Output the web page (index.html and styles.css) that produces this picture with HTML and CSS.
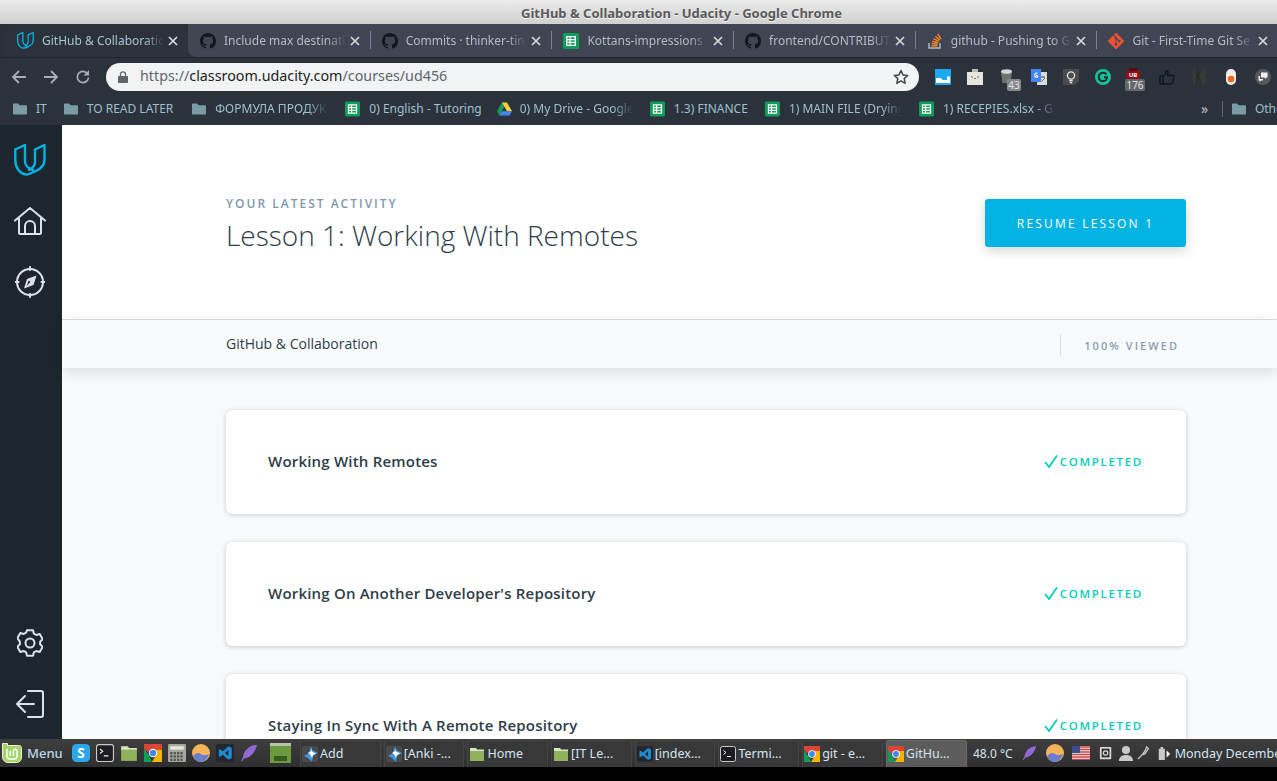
FILE: index.html
```html
<!DOCTYPE html>
<html lang="en">
<head>
<meta charset="utf-8">
<title>GitHub &amp; Collaboration - Udacity</title>
<link rel="stylesheet" href="styles.css">
</head>
<body>
<svg class="defs" width="0" height="0" aria-hidden="true">
  <symbol id="gh" viewBox="0 0 16 16"><path fill="#14161a" d="M8 0C3.58 0 0 3.58 0 8c0 3.54 2.29 6.53 5.47 7.59.4.07.55-.17.55-.38 0-.19-.01-.82-.01-1.49-2.01.37-2.53-.49-2.69-.94-.09-.23-.48-.94-.82-1.13-.28-.15-.68-.52-.01-.53.63-.01 1.08.58 1.23.82.72 1.21 1.87.87 2.33.66.07-.52.28-.87.51-1.07-1.78-.2-3.64-.89-3.64-3.95 0-.87.31-1.59.82-2.15-.08-.2-.36-1.02.08-2.12 0 0 .67-.21 2.2.82.64-.18 1.32-.27 2-.27.68 0 1.36.09 2 .27 1.53-1.04 2.2-.82 2.2-.82.44 1.1.16 1.92.08 2.12.51.56.82 1.27.82 2.15 0 3.07-1.87 3.75-3.65 3.95.29.25.54.73.54 1.48 0 1.07-.01 1.93-.01 2.2 0 .21.15.46.55.38A8.013 8.013 0 0016 8c0-4.42-3.58-8-8-8z"/></symbol>
  <symbol id="sheet" viewBox="0 0 16 16"><rect width="16" height="16" rx="1.5" fill="#0f9d58"/><path fill="none" stroke="#fff" stroke-width="1.3" d="M3.700 3.700h8.600v8.600H3.700zM3.700 6.600h8.600M3.700 9.400h8.600M7 3.700v8.600"/></symbol>
  <symbol id="udacity" viewBox="0 0 32 32"><path fill="none" stroke="currentColor" stroke-width="2.400" stroke-linejoin="round" stroke-linecap="round" d="M1.300 5.500L11 1v16c0 4 3 7.500 8 9M1.300 5.500V16c0 8 4.700 14 10.700 14.500 2 0 6-1.500 10-3.500 5-2.500 8.500-6 8.500-11V1L21 5.500V18c0 3-2 6-6 8"/></symbol>
  <symbol id="close" viewBox="0 0 10 10"><path fill="none" stroke="currentColor" stroke-width="1.700" d="M1 1l8 8M9 1l-8 8"/></symbol>
  <symbol id="folder" viewBox="0 0 14 14"><path fill="#7b9ca5" d="M0 2.500C0 2 .4 1.500 1 1.500h4l1.500 1.800H13c.6 0 1 .4 1 1v7.200c0 .6-.4 1-1 1H1c-.6 0-1-.4-1-1z"/></symbol>
  <symbol id="chrome" viewBox="0 0 16 16"><path fill="#db4437" d="M0 0h16v5H8L3 7 0 4z"/><path fill="#0f9d58" d="M0 4l5 7 2 5H0z"/><path fill="#f4b400" d="M8 5h8v11H7l3-5z"/><circle cx="8" cy="8" r="3.800" fill="#fff"/><circle cx="8" cy="8" r="2.900" fill="#4285f4"/></symbol>
  <symbol id="tfolder" viewBox="0 0 16 16"><path fill="#d8e4c8" d="M1 2h6l1 1.500h7V6H1z"/><path fill="#8fb35c" d="M1 5h14v10H1z"/></symbol>
  <symbol id="tterm" viewBox="0 0 16 16"><rect x=".5" y=".5" width="15" height="15" rx="2" fill="#1c1c22" stroke="#c9c9c9"/><path fill="none" stroke="#eee" stroke-width="1" d="M3.500 4.500l2.500 2-2.500 2M7 10.500h4"/></symbol>
  <symbol id="tanki" viewBox="0 0 16 16"><rect width="16" height="16" rx="2" fill="#4a4a4a"/><path fill="#3f97e6" d="M9 0l1 4 6 3-5 3-1 6-4-4-4-2 5-3z"/><path fill="#fff" d="M9 2l1 3.500 4 2-3 1.500-1 3-2-4-2-1 3-2z"/></symbol>
  <symbol id="tcode" viewBox="0 0 16 16"><rect width="16" height="16" rx="2" fill="#23272c"/><path fill="#1f8ad2" d="M11 2l3 1.500v9L11 14 6 9.500 3.500 11.300 2.500 10.800V5.200l1-.5L6 6.500zM11 5.300L8 8l3 2.700z"/></symbol>
  <symbol id="tglobe" viewBox="0 0 18 18"><circle cx="9" cy="9" r="9" fill="#f6b55a"/><path fill="#6b7fd0" d="M1 12c3-3 5-4 8-2s5 1 8 0c-1 4-4 8-8 8s-7-3-8-6z"/></symbol>
  <symbol id="tfeather" viewBox="0 0 18 18"><path fill="#9468d2" d="M17 1C10 1 4 6 3 13l-2 4 1 .5 2-3c6 0 11-6 13-13.500z"/></symbol>
  <symbol id="tskype" viewBox="0 0 16 16"><rect width="16" height="16" rx="4" fill="#29a8e8"/><text x="8" y="12.500" class="skype-s">S</text></symbol>
</svg>

<div class="screen">
  <header class="titlebar">GitHub &amp; Collaboration - Udacity - Google Chrome</header>

  <nav class="tabstrip">
    <div class="tab tab-active">
      <svg class="tab-ico udacity-c"><use href="#udacity"/></svg>
      <span class="tab-title">GitHub &amp; Collaboratio</span>
      <svg class="tab-x"><use href="#close"/></svg>
    </div>
    <div class="tab tab-first">
      <svg class="tab-ico"><use href="#gh"/></svg>
      <span class="tab-title">Include max destinati</span>
      <svg class="tab-x"><use href="#close"/></svg>
    </div>
    <div class="tab">
      <svg class="tab-ico"><use href="#gh"/></svg>
      <span class="tab-title">Commits · thinker-tin</span>
      <svg class="tab-x"><use href="#close"/></svg>
    </div>
    <div class="tab">
      <svg class="tab-ico"><use href="#sheet"/></svg>
      <span class="tab-title">Kottans-impressions</span>
      <svg class="tab-x"><use href="#close"/></svg>
    </div>
    <div class="tab">
      <svg class="tab-ico"><use href="#gh"/></svg>
      <span class="tab-title">frontend/CONTRIBUT</span>
      <svg class="tab-x"><use href="#close"/></svg>
    </div>
    <div class="tab">
      <svg class="tab-ico" viewBox="0 0 16 16"><path fill="none" stroke="#bcbbbb" stroke-width="1.400" d="M2 10v5h11v-5"/><path fill="none" stroke="#f48024" stroke-width="1.500" d="M4.500 12.800h6M4.700 10.600l5.900.6M5.300 8.200l5.700 1.500M6.500 5.700l5.200 2.700M8.400 3.300l4.400 3.800M10.800 1l3.200 4.800"/></svg>
      <span class="tab-title">github - Pushing to Gi</span>
      <svg class="tab-x"><use href="#close"/></svg>
    </div>
    <div class="tab">
      <svg class="tab-ico" viewBox="0 0 16 16"><path fill="#f05033" d="M15.700 7.300L8.700.3a1 1 0 00-1.400 0L5.800 1.800l1.800 1.800a1.200 1.200 0 011.500 1.500l1.800 1.800a1.200 1.200 0 11-.7.700L8.500 6v4.400a1.200 1.200 0 11-1-.1V5.900a1.200 1.200 0 01-.6-1.600L5.100 2.500.3 7.300a1 1 0 000 1.400l7 7a1 1 0 001.400 0l7-7a1 1 0 000-1.400z"/></svg>
      <span class="tab-title">Git - First-Time Git Se</span>
      <svg class="tab-x"><use href="#close"/></svg>
    </div>
  </nav>

  <div class="toolbar">
    <svg class="nav-ico" viewBox="0 0 16 16"><path fill="none" stroke="#a9aeb5" stroke-width="1.800" d="M15 8H2M8 2L2 8l6 6"/></svg>
    <svg class="nav-ico" viewBox="0 0 16 16"><path fill="none" stroke="#a9aeb5" stroke-width="1.800" d="M1 8h13M8 2l6 6-6 6"/></svg>
    <svg class="nav-ico" viewBox="0 0 16 16"><path fill="none" stroke="#a9aeb5" stroke-width="1.700" d="M13.500 8.500A5.600 5.600 0 118 2.400c1.800 0 3.300.8 4.500 2.300"/><path fill="#a9aeb5" d="M14 1v5.500H8.500z"/></svg>
    <div class="omnibox">
      <svg class="lock" viewBox="0 0 10 12"><path fill="#5f6368" d="M1 5h8c.5 0 1 .4 1 1v5c0 .6-.5 1-1 1H1c-.5 0-1-.4-1-1V6c0-.6.5-1 1-1z"/><path fill="none" stroke="#5f6368" stroke-width="1.300" d="M2.500 5.500V3.300a2.500 2.500 0 015 0v2.200"/></svg>
      <span class="url"><span class="url-dim">https://</span>classroom.udacity.com<span class="url-dim">/courses/ud456</span></span>
      <svg class="star" viewBox="0 0 16 16"><path fill="none" stroke="#44474c" stroke-width="1.500" stroke-linejoin="round" d="M8 1.500l2 4.400 4.700.5-3.500 3.200 1 4.700L8 11.900l-4.200 2.400 1-4.700L1.300 6.400 6 5.900z"/></svg>
    </div>
    <div class="extensions">
      <span class="ext"><svg viewBox="0 0 16 16" class="ext-ico"><rect width="16" height="16" fill="#1ea7f2"/><path fill="#fff" d="M1 9h5l1.500 2H12V7.500h3V14H1z"/></svg></span>
      <span class="ext"><svg viewBox="0 0 16 16" class="ext-ico"><path fill="#e6e4de" d="M0 3h16v13H0z"/><path fill="#bdbab2" d="M5 0h6v3H5z"/><path fill="none" stroke="#777" d="M4 7.500l2 1M12 7.500l-2 1M7 9.500h2"/></svg></span>
      <span class="ext"><svg viewBox="0 0 16 16" class="ext-ico"><path fill="#6f7273" d="M2 3h11l-1.500 11h-8z"/><ellipse cx="7.500" cy="2.500" rx="5.500" ry="2.300" fill="#d5d6d6"/></svg><b class="badge badge-small">43</b></span>
      <span class="ext"><svg viewBox="0 0 16 16" class="ext-ico"><path fill="#d8dadd" d="M7 3h9v13H6z"/><path fill="#4285f4" d="M0 0h10v13H0z"/><path fill="none" stroke="#fff" stroke-width="1.200" d="M6.500 4.500a2 2 0 100 3.500V6.500H5"/><path fill="none" stroke="#666" d="M10 8h4M12 7v2M10.500 12.500L14 9"/></svg></span>
      <span class="ext"><svg viewBox="0 0 16 16" class="ext-ico"><path fill="#4a4b4c" d="M0 0h16v12l-4 4H0z"/><circle cx="8" cy="6.500" r="3.600" fill="none" stroke="#e2e2e2" stroke-width="1.300"/><path stroke="#e2e2e2" stroke-width="1.400" d="M6.300 11.500h3.400M6.800 13.500h2.400"/></svg></span>
      <span class="ext"><svg viewBox="0 0 16 16" class="ext-ico"><circle cx="8" cy="8" r="8" fill="#15c39a"/><path fill="none" stroke="#1a2b2a" stroke-width="2" d="M11.500 5.500A4.300 4.300 0 108 12.300a4 4 0 004-4H9"/></svg></span>
      <span class="ext"><svg viewBox="0 0 16 16" class="ext-ico ext-ub"><path fill="#8b0f16" d="M1 3h14v9H1z"/><path fill="#5c0a0f" d="M4 0h8v3H4z"/><text x="8" y="9" class="ext-text">UB</text></svg><b class="badge">176</b></span>
      <span class="ext"><svg viewBox="0 0 16 16" class="ext-ico"><path fill="none" stroke="#101317" stroke-width="1.300" d="M1 7h3v8H1zM4 7.500l3-3V1.500c1.500-.5 2.500 1 2 3L8.500 6.500H14c1 0 1.500 1 1 2l-1.500 5.500c-.2.700-.7 1-1.500 1H4"/></svg></span>
      <span class="ext"><svg viewBox="0 0 16 16" class="ext-ico"><rect x="1.500" width="13" height="15" fill="#36393a"/><path fill="none" stroke="#27292a" stroke-width="1.400" d="M6 0v15M9 0v4l-2.500 3.500L9 11v4"/></svg></span>
      <span class="ext"><svg viewBox="0 0 16 16" class="ext-ico"><rect x="3" width="10" height="16" rx="5" fill="#f3eeea"/><circle cx="8" cy="10" r="3.300" fill="#f26522"/></svg></span>
      <span class="ext"><svg viewBox="0 0 16 16" class="ext-ico"><circle cx="8" cy="8" r="8" fill="#55585b"/><path fill="#f0f0f0" d="M6 3.500h6.500v5H11v1.500L9.500 8.500H6z"/><path fill="#f0f0f0" d="M3.500 7H5v3h3v1.500H6L4.500 13v-1.500h-1z"/></svg></span>
    </div>
  </div>

  <div class="bookmarks">
    <span class="bm"><svg class="bm-folder"><use href="#folder"/></svg><span>IT</span></span>
    <span class="bm bm-later"><svg class="bm-folder"><use href="#folder"/></svg><span>TO READ LATER</span></span>
    <span class="bm"><svg class="bm-folder"><use href="#folder"/></svg><span class="bm-cut">ФОРМУЛА ПРОДУК</span></span>
    <span class="bm bm-english"><svg class="bm-sheet"><use href="#sheet"/></svg><span>0) English - Tutoring</span></span>
    <span class="bm bm-drive"><svg class="bm-sheet" viewBox="0 0 16 16"><path fill="#0f9d58" d="M5.300 1L0 10.300 2.600 15l5.300-9.300z"/><path fill="#ffcd40" d="M5.300 1h5.300L16 10.300h-5.300z"/><path fill="#4285f4" d="M2.600 15l2.700-4.700H16L13.300 15z"/></svg><span class="bm-cut">0) My Drive - Google</span></span>
    <span class="bm"><svg class="bm-sheet"><use href="#sheet"/></svg><span>1.3) FINANCE</span></span>
    <span class="bm"><svg class="bm-sheet"><use href="#sheet"/></svg><span class="bm-cut">1) MAIN FILE (Drying</span></span>
    <span class="bm"><svg class="bm-sheet"><use href="#sheet"/></svg><span class="bm-cut">1) RECEPIES.xlsx - G</span></span>
    <span class="bm-more">»</span>
    <span class="bm-sep"></span>
    <span class="bm bm-other"><svg class="bm-folder"><use href="#folder"/></svg><span>Other bookmarks</span></span>
  </div>

  <div class="app">
    <aside class="sidebar">
      <svg class="side-logo"><use href="#udacity"/></svg>
      <svg class="side-home" viewBox="0 0 32 28"><path fill="none" stroke="#dbe2e8" stroke-width="2" stroke-linecap="round" stroke-linejoin="round" d="M1 13.500L16 1l15 12.500M5 11v15c0 .7.400 1 1 1h20c.6 0 1-.3 1-1V11M11 27v-8a5 5 0 0110 0v8"/></svg>
      <svg class="side-compass" viewBox="0 0 30 32"><g fill="none" stroke="#dbe2e8" stroke-width="2" stroke-linecap="round"><circle cx="15" cy="16" r="13"/><path d="M15 1v3M15 28v3M.5 16h3M26.500 16h3"/></g><path fill="#dbe2e8" d="M21.500 9.500L18.500 19 9 22.500l3-9.500zM13.700 14.500L11.800 20l3.700-4.300z"/></svg>
      <div class="side-fill"></div>
      <svg class="side-gear" viewBox="0 0 26 28"><g fill="none" stroke="#dbe2e8" stroke-width="2" stroke-linejoin="round"><circle cx="13" cy="14" r="4.500"/><path d="M10 1.200h6l.9 3.500 2.300 1.300 3.500-1 3 5.200-2.600 2.500v2.600l2.600 2.500-3 5.200-3.500-1-2.300 1.300-.9 3.500h-6l-.9-3.500-2.300-1.300-3.500 1-3-5.200 2.600-2.500v-2.600L.3 9.200l3-5.200 3.500 1 2.300-1.300z"/></g></svg>
      <svg class="side-exit" viewBox="0 0 28 28"><path fill="none" stroke="#dbe2e8" stroke-width="2" stroke-linecap="round" stroke-linejoin="round" d="M12 1h13c1.300 0 2 .7 2 2v22c0 1.300-.7 2-2 2H12M18 14H1M9 6l-8 8 8 8"/></svg>
    </aside>

    <main class="content">
      <section class="hero">
        <div class="hero-text">
          <div class="eyebrow">YOUR LATEST ACTIVITY</div>
          <h1 class="hero-title">Lesson 1: Working With Remotes</h1>
        </div>
        <a class="resume">RESUME LESSON 1</a>
      </section>
      <section class="course-bar">
        <span class="course-name">GitHub &amp; Collaboration</span>
        <span class="viewed">100% VIEWED</span>
      </section>
      <section class="cards">
        <article class="card">
          <h2 class="card-title">Working With Remotes</h2>
          <span class="done"><svg class="check" viewBox="0 0 14 13"><path fill="none" stroke="#02ccba" stroke-width="1.800" d="M1 7l4 5 8-11.500"/></svg>COMPLETED</span>
        </article>
        <article class="card">
          <h2 class="card-title">Working On Another Developer's Repository</h2>
          <span class="done"><svg class="check" viewBox="0 0 14 13"><path fill="none" stroke="#02ccba" stroke-width="1.800" d="M1 7l4 5 8-11.500"/></svg>COMPLETED</span>
        </article>
        <article class="card">
          <h2 class="card-title">Staying In Sync With A Remote Repository</h2>
          <span class="done"><svg class="check" viewBox="0 0 14 13"><path fill="none" stroke="#02ccba" stroke-width="1.800" d="M1 7l4 5 8-11.500"/></svg>COMPLETED</span>
        </article>
      </section>
    </main>
  </div>

  <footer class="taskbar">
    <span class="start"><svg class="mint" viewBox="0 0 20 20"><path fill="#a6d56a" stroke="#e8f3d8" d="M.5.500h5v2h11c2 0 3 1 3 3V14c0 3-2 5.500-5 5.500H6c-3 0-5.500-2.500-5.500-5.500z"/><path fill="none" stroke="#fff" stroke-width="1.500" d="M5 6v7c0 2 1 3 3 3h4c2 0 3-1 3-3V8a1.800 1.800 0 00-3.600 0v5M8.200 8v5"/></svg>Menu</span>
    <div class="launchers">
      <svg class="lnch"><use href="#tskype"/></svg>
      <svg class="lnch"><use href="#tterm"/></svg>
      <svg class="lnch"><use href="#tfolder"/></svg>
      <svg class="lnch"><use href="#chrome"/></svg>
      <svg class="lnch" viewBox="0 0 16 16"><rect width="16" height="16" rx="1" fill="#a8a59b"/><rect x="2" y="2" width="12" height="3" fill="#e6e6df"/><path stroke="#555" stroke-width="2" stroke-dasharray="2 1" d="M2 8h12M2 11h12M2 14h12"/></svg>
      <svg class="lnch"><use href="#tglobe"/></svg>
      <svg class="lnch"><use href="#tcode"/></svg>
      <svg class="lnch"><use href="#tfeather"/></svg>
      <svg class="lnch lnch-box" viewBox="0 0 21 20"><path fill="#b9c2a8" d="M0 0h21v3H0z"/><path fill="#6d9a3e" d="M0 3h21v17H0z"/><path fill="#3b5a22" d="M4 13h13v5H4z"/></svg>
    </div>
    <div class="win-list">
      <span class="win"><svg class="win-ico"><use href="#tanki"/></svg>Add</span>
      <span class="win"><svg class="win-ico"><use href="#tanki"/></svg>[Anki -...</span>
      <span class="win"><svg class="win-ico"><use href="#tfolder"/></svg>Home</span>
      <span class="win"><svg class="win-ico"><use href="#tfolder"/></svg>[IT Le...</span>
      <span class="win"><svg class="win-ico"><use href="#tcode"/></svg>[index...</span>
      <span class="win"><svg class="win-ico"><use href="#tterm"/></svg>Termi...</span>
      <span class="win"><svg class="win-ico"><use href="#chrome"/></svg>git - e...</span>
      <span class="win win-active"><svg class="win-ico"><use href="#chrome"/></svg>GitHu...</span>
    </div>
    <div class="tray">
      <span class="temp">48.0 °C</span>
      <svg class="tray-ico tray-feather"><use href="#tfeather"/></svg>
      <svg class="tray-ico tray-globe"><use href="#tglobe"/></svg>
      <svg class="tray-ico tray-flag" viewBox="0 0 18 14"><path fill="#eee" d="M0 0h18v14H0z"/><path stroke="#c8464a" stroke-width="1.300" d="M0 1h18M0 3.500h18M0 6h18M0 8.500h18M0 11h18M0 13.400h18"/><path fill="#3f4d8c" d="M0 0h8v7H0z"/></svg>
      <svg class="tray-ico tray-box" viewBox="0 0 16 16"><rect x="1" y="1" width="13" height="14" rx="1" fill="#d8d8d8"/><path fill="#333" d="M3 3h9v10H3z"/><circle cx="7.500" cy="8" r="2.500" fill="none" stroke="#ddd" stroke-width="1.300"/></svg>
      <svg class="tray-ico tray-person" viewBox="0 0 16 16"><circle cx="8" cy="5" r="4" fill="#c9c9c9"/><path fill="#c9c9c9" d="M1 16c0-4 3-6 7-6s7 2 7 6z"/></svg>
      <svg class="tray-ico tray-pen" viewBox="0 0 16 16"><path stroke="#c9c9c9" stroke-width="1.500" fill="none" d="M1 15l5-5M11 1L9 6 6 10l3-1 4-6z"/></svg>
      <svg class="tray-ico tray-battery" viewBox="0 0 16 16"><path fill="#c9c9c9" d="M2 3h2V1h3v2h2v13H2z"/><path fill="#fff" d="M11 5l4 4-4 4z"/></svg>
      <span class="clock">Monday December 10, 10:26</span>
    </div>
  </footer>
  <div class="under"></div>
</div>
</body>
</html>
```
FILE: styles.css
```css
* { box-sizing: border-box; }
html, body { margin: 0; padding: 0; height: 100%; overflow: hidden; }
body { background: #000; font-family: "Noto Sans", sans-serif; }
.defs { position: absolute; }
.screen { width: 1277px; height: 781px; display: flex; flex-direction: column; overflow: hidden; }

/* Window title */
.titlebar { height: 24px; flex: none; display: flex; align-items: center; justify-content: center; padding: 2px 0 0 86px; background: linear-gradient(#ebebeb, #d0d0d0); color: #5a5a5a; font-weight: 700; font-size: 13px; text-shadow: 0 1px 0 #f4f4f4; }

/* Tabs */
.tabstrip { height: 33px; flex: none; display: flex; padding-left: 5px; background: #2a303a; overflow: hidden; }
.tab { width: 181.700px; flex: none; display: flex; align-items: center; padding: 0 10px 0 12px; background: #404553; color: #b6bac3; font-size: 12px; position: relative; }
.tab::before { content: ""; position: absolute; left: 0; top: 7px; bottom: 8px; width: 1px; background: #7d818c; }
.tab-first { border-radius: 0 0 0 8px; }
.tab-first::before, .tab-active::before { display: none; }
.tab-active { width: 183px; background: #2c323c; color: #a9c3d0; border-radius: 8px 8px 0 0; }
.tab-ico { width: 16px; height: 16px; flex: none; margin-right: 8px; }
.udacity-c { color: #02b3e4; width: 17px; height: 17px; margin-right: 8px; }
.tab-title { flex: 1; min-width: 0; white-space: nowrap; overflow: hidden; -webkit-mask-image: linear-gradient(to right, #000 84%, transparent 100%); mask-image: linear-gradient(to right, #000 84%, transparent 100%); }
.tab-x { width: 10px; height: 10px; flex: none; margin-left: 4px; color: #d5d8dd; }

/* Toolbar */
.toolbar { height: 35px; flex: none; display: flex; align-items: center; padding: 4px 0 0 11px; background: #2c323c; border-top: 1px solid #22272f; }
.nav-ico { width: 16px; height: 16px; flex: none; margin-right: 16px; }
.nav-ico:nth-child(3) { margin-right: 15px; }
.omnibox { width: 813px; height: 28px; flex: none; display: flex; align-items: center; padding: 0 10px 0 12px; background: #f1f3f4; border-radius: 14px; }
.lock { width: 10px; height: 12px; flex: none; margin-right: 12px; }
.url { flex: 1; font-size: 14.300px; color: #1d1f22; white-space: nowrap; padding-bottom: 3px; }
.url-dim { color: #60656b; }
.star { width: 16px; height: 16px; flex: none; }
.extensions { display: flex; margin-left: 8px; }
.ext { width: 32px; height: 20px; flex: none; display: flex; justify-content: center; align-items: center; position: relative; }
.ext-ico { width: 16px; height: 16px; }
.ext-ub { margin: -2px 4px 0 0; }
.ext-text { font: 700 6px "Noto Sans", sans-serif; fill: #fff; text-anchor: middle; }
.badge { position: absolute; top: 12px; left: 6px; width: 20px; height: 12px; border-radius: 2px; background: #63666a; color: #e4e4e4; font-size: 10px; font-weight: 400; line-height: 12px; text-align: center; }
.badge-small { left: 16px; width: 14px; background: #85888b; }

/* Bookmarks */
.bookmarks { height: 33px; flex: none; display: flex; align-items: center; gap: 17px; padding-left: 13px; background: #2c323c; color: #9cc0cd; font-size: 12px; white-space: nowrap; }
.bm { display: flex; align-items: center; flex: none; }
.bm-later { margin-right: 2px; }
.bm-english { margin-right: -2px; }
.bm-folder { width: 14px; height: 14px; margin-right: 9px; flex: none; }
.bm-sheet { width: 15px; height: 16px; margin-right: 9px; flex: none; }
.bm-drive .bm-sheet { margin-right: 8px; }
.bm-cut { width: 113px; overflow: hidden; -webkit-mask-image: linear-gradient(to right, #000 82%, transparent 100%); mask-image: linear-gradient(to right, #000 82%, transparent 100%); }
.bm-more { flex: none; margin-left: 128px; color: #c0c4ca; font-size: 14px; width: 9px; }
.bm-sep { flex: none; width: 1px; height: 16px; background: #5f6570; margin-left: -5px; }
.bm-other { margin-left: -8px; }

/* App shell */
.app { height: 614px; flex: none; display: flex; overflow: hidden; }
.sidebar { width: 62px; flex: none; display: flex; flex-direction: column; align-items: flex-start; background: #1c262f; padding-left: 14px; }
.side-logo { width: 32px; height: 32px; color: #02b3e4; margin-top: 19px; }
.side-home { width: 32px; height: 28px; margin-top: 31px; }
.side-compass { width: 30px; height: 32px; margin-top: 31px; margin-left: 1px; }
.side-fill { flex: 1; }
.side-gear { width: 26px; height: 28px; margin-left: 3px; }
.side-exit { width: 28px; height: 28px; margin: 33px 0 21px 2px; }

.content { flex: 1; min-width: 0; background: #f9fafc; display: flex; flex-direction: column; }
.hero { height: 195px; flex: none; background: #fff; border-bottom: 1px solid #dee1e4; display: flex; align-items: flex-start; justify-content: space-between; padding: 74px 91px 0 164px; }
.eyebrow { font: 600 12px/16px "Open Sans", sans-serif; letter-spacing: 2px; color: #7d97ad; margin-top: -3px; margin-bottom: 4px; }
.hero-title { margin: 0; font: 300 28px/38px "Open Sans", sans-serif; color: #2e3d49; }
.resume { width: 201px; height: 48px; flex: none; display: flex; align-items: center; justify-content: center; background: #02b3e4; color: #fff; font: 500 12px "Open Sans", sans-serif; letter-spacing: 2.200px; border-radius: 3px; box-shadow: 0 4px 12px rgba(0, 0, 0, .16); }
.course-bar { height: 48px; flex: none; display: flex; align-items: center; justify-content: space-between; background: #f9fafc; padding: 0 98px 0 164px; box-shadow: 0 4px 14px rgba(0, 0, 0, .13); position: relative; }
.course-name { font: 400 14px "Open Sans", sans-serif; color: #2e3d49; margin-bottom: 2px; }
.viewed { display: flex; align-items: center; height: 22px; padding-left: 23px; border-left: 1px solid #dee1e4; font: 600 11px "Open Sans", sans-serif; letter-spacing: 2.050px; color: #889db0; position: relative; top: 1px; }
.cards { display: flex; flex-direction: column; gap: 28px; padding: 42px 91px 0 164px; }
.card { height: 104px; flex: none; display: flex; align-items: center; justify-content: space-between; padding: 0 43px 2px 42px; background: #fff; border-radius: 6px; box-shadow: 0 1px 5px rgba(0, 0, 0, .2); }
.card-title { margin: 0; font: 600 15px "Open Sans", sans-serif; letter-spacing: .2px; color: #2e3d49; }
.done { display: flex; align-items: center; font: 600 11.500px "Open Sans", sans-serif; letter-spacing: 1.700px; color: #02ccba; }
.check { width: 14px; height: 13px; margin-right: 2px; }

/* Desktop panel */
.taskbar { height: 28px; flex: none; display: flex; align-items: center; background: linear-gradient(#3e3e3e, #2f2f2f); color: #d4e4f2; font-size: 12.500px; white-space: nowrap; }
.start { display: flex; align-items: center; width: 72px; padding-left: 2px; flex: none; font-weight: 500; font-size: 13px; color: #bdd7ee; }
.mint { width: 20px; height: 20px; margin-right: 5px; }
.launchers { display: flex; align-items: center; gap: 6px; flex: none; width: 228px; }
.lnch { width: 18px; height: 20px; flex: none; }
.lnch-box { width: 21px; height: 20px; margin-left: 6px; }
.win-list { display: flex; gap: 3px; flex: none; width: 672px; }
.win { width: 80.700px; height: 27px; flex: none; display: flex; align-items: center; gap: 2px; padding-left: 1px; background: #383838; border: 1px solid #444; border-bottom: 0; border-radius: 3px 3px 0 0; }
.win-active { background: #5c5c5c; border-color: #6a6a6a; }
.win-ico { width: 16px; height: 16px; flex: none; }
.tray { display: flex; align-items: center; flex: none; margin-left: 1px; }
.temp { margin-right: 9px; font-size: 12px; }
.tray-ico { height: 16px; flex: none; }
.tray-feather { width: 15px; margin-right: 9px; }
.tray-globe { width: 18px; height: 18px; margin-right: 8px; }
.tray-flag { width: 18px; height: 14px; margin-right: 9px; }
.tray-box { width: 14px; margin-right: 5px; }
.tray-person { width: 16px; margin-right: 3px; }
.tray-pen { width: 14px; margin-right: 6px; }
.tray-battery { width: 14px; margin-right: 4px; }
.clock { font-size: 12.500px; }
.skype-s { font: 700 12px "Noto Sans", sans-serif; fill: #fff; text-anchor: middle; }
.under { flex: 1; background: #000; }
```
